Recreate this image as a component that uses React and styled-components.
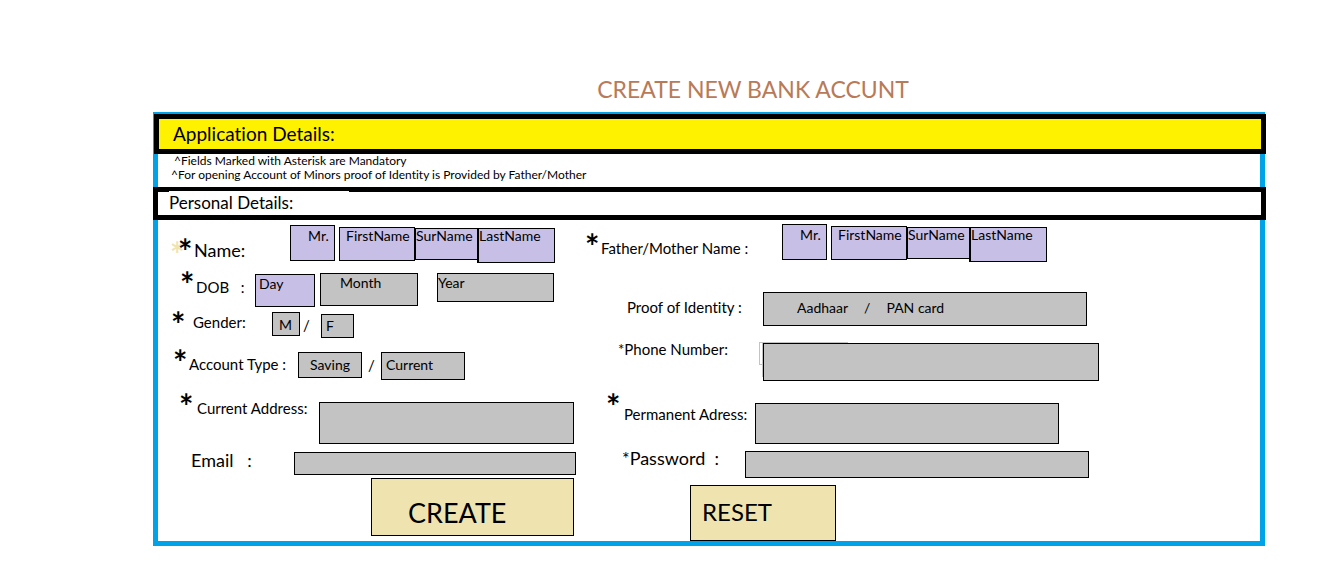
import React from "react";
import styled, { createGlobalStyle, css } from "styled-components";

const GlobalStyle = createGlobalStyle`
  *, *::before, *::after { box-sizing: border-box; }
  body {
    margin: 0;
    background: #fff;
    color: #000;
    font-family: Lato, "Liberation Sans", sans-serif;
    font-size: 14px;
    font-variant-ligatures: none;
  }
`;

const Page = styled.main`
  padding: 73px 70px 24px 153px;
`;

const Title = styled.h1`
  margin: 0 0 7px;
  padding-left: 88px;
  font-size: 23px;
  line-height: 32px;
  font-weight: 400;
  text-align: center;
  color: #b97a57;
`;

const Panel = styled.form`
  border: 5px solid #00a2e8;
  border-top-width: 2px;
`;

const Bar = styled.div`
  display: flex;
  border: 5px solid #000;
  margin: 0 -6px 0 ${(p) => (p.$yellow ? "-4px" : "-5px")};
  height: ${(p) => (p.$yellow ? "40px" : "33px")};
  padding-left: ${(p) => (p.$yellow ? "14px" : "11px")};
  background: ${(p) => (p.$yellow ? "#fff200" : "#fff")};
`;

const BarTitle = styled.h2`
  margin: ${(p) => (p.$wide ? "-1px 0 0" : "0")};
  min-width: ${(p) => (p.$wide ? "180px" : "0")};
  background: ${(p) => (p.$wide ? "#fff" : "none")};
  font-weight: 400;
  font-size: ${(p) => (p.$wide ? "17px" : "19px")};
  line-height: ${(p) => (p.$wide ? "24px" : "30px")};
`;

const Notes = styled.div`
  height: 33px;
  padding-left: 13px;
  font-size: 12px;
  line-height: 14px;
`;

const Note = styled.p`
  margin: 0;
  padding-left: ${(p) => (p.$indent ? "3px" : "0")};
`;

const Columns = styled.div`
  display: grid;
  grid-template-columns: 422px minmax(0, 1fr);
`;

const Column = styled.div`
  display: flex;
  flex-direction: column;
`;

const Row = styled.div`
  display: flex;
  align-items: flex-start;
  min-height: ${(p) => p.$height}px;
  padding-left: ${(p) => p.$indent}px;
`;

const StarMark = styled.span`
  flex: 0 0 ${(p) => p.$width}px;
  padding-top: ${(p) => p.$top || 0}px;
  font-size: 34px;
  line-height: 31px;
  font-weight: 700;
  text-shadow: ${(p) => (p.$echo ? "-8px 3px #efe4b0" : "none")};
`;

const labelText = css`
  flex: 0 0 ${(p) => p.$width}px;
  padding-top: ${(p) => p.$top}px;
  font-size: ${(p) => (p.$large ? 18 : 15)}px;
  line-height: ${(p) => (p.$large ? 18 : 20)}px;
  white-space: pre;
`;

const Label = styled.label`
  ${labelText}
`;

const GroupLabel = styled.span`
  ${labelText}
`;

const Fields = styled.div`
  display: flex;
  align-items: flex-start;
  padding-top: ${(p) => p.$top}px;
  padding-left: ${(p) => p.$start || 0}px;
  gap: ${(p) => p.$gap || 0}px;
`;

const boxLook = css`
  width: ${(p) => p.$width}px;
  height: ${(p) => p.$height}px;
  margin: 0;
  border: 1px solid #000;
  border-radius: 0;
  background: ${(p) => (p.$lilac ? "#c8bfe7" : "#c3c3c3")};
  color: #000;
  font: inherit;
  font-size: 14px;
`;

const TextBox = styled.input`
  ${boxLook}
  display: block;
  padding: 0 0 ${(p) => p.$lift || 0}px ${(p) => p.$inset || 0}px;
  &::placeholder { color: #000; opacity: 1; }
`;

const Choice = styled.select`
  ${boxLook}
  appearance: none;
  padding: 0 0 ${(p) => p.$lift || 0}px ${(p) => p.$inset || 0}px;
`;

const AddressBox = styled.textarea`
  ${boxLook}
  display: block;
  resize: none;
`;

const NameGroup = styled.div`
  display: flex;
  align-items: flex-start;
  padding-top: ${(p) => p.$top}px;
`;

const NameParts = styled.div`
  display: flex;
  align-items: flex-start;
  padding: 2px 0 0 4px;
  ${TextBox} + ${TextBox} { margin-top: 1px; }
  ${TextBox}:last-child { margin-left: -1px; border-left-width: 2px; }
`;

const Option = styled.label`
  ${boxLook}
  display: flex;
  padding-left: ${(p) => p.$inset}px;
  line-height: ${(p) => p.$line || 24}px;
`;

const IdentityBox = styled.div`
  ${boxLook}
  display: flex;
  gap: 16px;
  padding-left: 33px;
  line-height: 30px;
`;

const HiddenRadio = styled.input`
  appearance: none;
  position: absolute;
  width: 1px;
  height: 1px;
  margin: 0;
  opacity: 0;
`;

const Slash = styled.span`
  width: ${(p) => p.$width}px;
  font-size: 15px;
  line-height: 26px;
  text-align: center;
`;

const PhoneFrame = styled.div`
  position: relative;
  padding-top: 4px;
  z-index: 0;
  &::before, &::after {
    content: "";
    position: absolute;
    z-index: -1;
    left: -4px;
    top: 3px;
    width: 89px;
    height: 23px;
    border: 1px solid #c3c3c3;
  }
  &::after {
    left: -1px;
    width: 40px;
    height: 35px;
  }
`;

const ActionButton = styled.button`
  width: ${(p) => p.$width}px;
  height: ${(p) => p.$height}px;
  margin-left: ${(p) => p.$indent}px;
  padding: ${(p) => p.$pad};
  border: 1px solid #000;
  background: #efe4b0;
  color: #000;
  font: inherit;
  font-size: ${(p) => p.$size}px;
  text-align: left;
`;

function NameFields({ id, top }) {
  return (
    <NameGroup $top={top}>
      <Choice $lilac $width={45} $height={36} $lift={15} $inset={17} aria-label="Salutation">
        <option>Mr.</option>
      </Choice>
      <NameParts>
        <TextBox id={id} $lilac $width={76} $height={34} $lift={17} $inset={6} placeholder="FirstName" />
        <TextBox $lilac $width={63} $height={32} $lift={17} placeholder="SurName" aria-label="Surname" />
        <TextBox $lilac $width={78} $height={35} $lift={20} placeholder="LastName" aria-label="Last name" />
      </NameParts>
    </NameGroup>
  );
}

export default function App() {
  return (
    <>
      <GlobalStyle />
      <Page>
        <Title>CREATE NEW BANK ACCUNT</Title>
        <Panel onSubmit={(e) => e.preventDefault()}>
          <Bar $yellow>
            <BarTitle>Application Details:</BarTitle>
          </Bar>
          <Notes>
            <Note $indent>^Fields Marked with Asterisk are Mandatory</Note>
            <Note>^For opening Account of Minors proof of Identity is Provided by Father/Mother</Note>
          </Notes>
          <Bar>
            <BarTitle $wide>Personal Details:</BarTitle>
          </Bar>
          <Columns>
            <Column>
              <Row $height={48} $indent={20}>
                <StarMark $echo $width={16} $top={15}>*</StarMark>
                <Label htmlFor="first" $large $width={96} $top={21}>Name:</Label>
                <NameFields id="first" top={5} />
              </Row>
              <Row $height={40} $indent={22}>
                <StarMark $width={16}>*</StarMark>
                <Label htmlFor="day" $width={59} $top={9}>DOB   :</Label>
                <Fields $top={6}>
                  <Choice id="day" $lilac $width={60} $height={33} $lift={15} $inset={3}>
                    <option>Day</option>
                  </Choice>
                </Fields>
                <Fields $top={5} $start={5} $gap={19}>
                  <Choice $width={98} $height={33} $lift={14} $inset={19} aria-label="Month">
                    <option>Month</option>
                  </Choice>
                  <Choice $width={117} $height={29} $lift={10} aria-label="Year">
                    <option>Year</option>
                  </Choice>
                </Fields>
              </Row>
              <Row $height={38} $indent={13}>
                <StarMark $width={22}>*</StarMark>
                <GroupLabel $width={79} $top={4}>Gender:</GroupLabel>
                <Fields $top={4}>
                  <Option $width={28} $height={24} $inset={6}><HiddenRadio type="radio" name="gender" />M</Option>
                  <Slash $width={13}>/</Slash>
                </Fields>
                <Fields $top={6} $start={8}>
                  <Option $width={33} $height={24} $inset={4} $line={22}><HiddenRadio type="radio" name="gender" />F</Option>
                </Fields>
              </Row>
              <Row $height={44} $indent={15}>
                <StarMark $width={16}>*</StarMark>
                <GroupLabel $width={109} $top={8}>Account Type :</GroupLabel>
                <Fields $top={6}>
                  <Option $width={64} $height={26} $inset={11}><HiddenRadio type="radio" name="account" />Saving</Option>
                  <Slash $width={19}>/</Slash>
                  <Option $width={84} $height={28} $inset={4}><HiddenRadio type="radio" name="account" />Current</Option>
                </Fields>
              </Row>
              <Row $height={58} $indent={21}>
                <StarMark $width={18}>*</StarMark>
                <Label htmlFor="current" $width={122} $top={8}>Current Address:</Label>
                <Fields $top={12}>
                  <AddressBox id="current" $width={255} $height={42} />
                </Fields>
              </Row>
              <Row $height={30} $indent={33}>
                <Label htmlFor="email" $large $width={103} $top={3}>Email   :</Label>
                <Fields $top={4}>
                  <TextBox id="email" type="email" $width={282} $height={23} />
                </Fields>
              </Row>
              <ActionButton type="submit" $width={203} $height={58} $indent={213} $size={27} $pad="10px 0 0 36px">
                CREATE
              </ActionButton>
            </Column>
            <Column>
              <Row $height={68} $indent={5}>
                <StarMark $width={16} $top={10}>*</StarMark>
                <Label htmlFor="parent" $width={181} $top={18}>Father/Mother Name :</Label>
                <NameFields id="parent" top={4} />
              </Row>
              <Row $height={51} $indent={47}>
                <GroupLabel $width={136} $top={9}>Proof of Identity :</GroupLabel>
                <Fields $top={4}>
                  <IdentityBox $width={324} $height={34}>
                    <label><HiddenRadio type="radio" name="proof" />Aadhaar</label>
                    <span>/</span>
                    <label><HiddenRadio type="radio" name="proof" />PAN card</label>
                  </IdentityBox>
                </Fields>
              </Row>
              <Row $height={51} $indent={38}>
                <Label htmlFor="phone" $width={145} $top={0}>*Phone Number:</Label>
                <PhoneFrame>
                  <TextBox id="phone" type="tel" $width={336} $height={38} />
                </PhoneFrame>
              </Row>
              <Row $height={58} $indent={26}>
                <StarMark $width={18}>*</StarMark>
                <Label htmlFor="permanent" $width={131} $top={14}>Permanent Adress:</Label>
                <Fields $top={13}>
                  <AddressBox id="permanent" $width={304} $height={41} />
                </Fields>
              </Row>
              <Row $height={37} $indent={42}>
                <Label htmlFor="password" $large $width={123} $top={1}>*Password  :</Label>
                <Fields $top={3}>
                  <TextBox id="password" type="password" $width={344} $height={27} />
                </Fields>
              </Row>
              <ActionButton type="reset" $width={146} $height={56} $indent={110} $size={24} $pad="0 0 3px 11px">
                RESET
              </ActionButton>
            </Column>
          </Columns>
        </Panel>
      </Page>
    </>
  );
}
